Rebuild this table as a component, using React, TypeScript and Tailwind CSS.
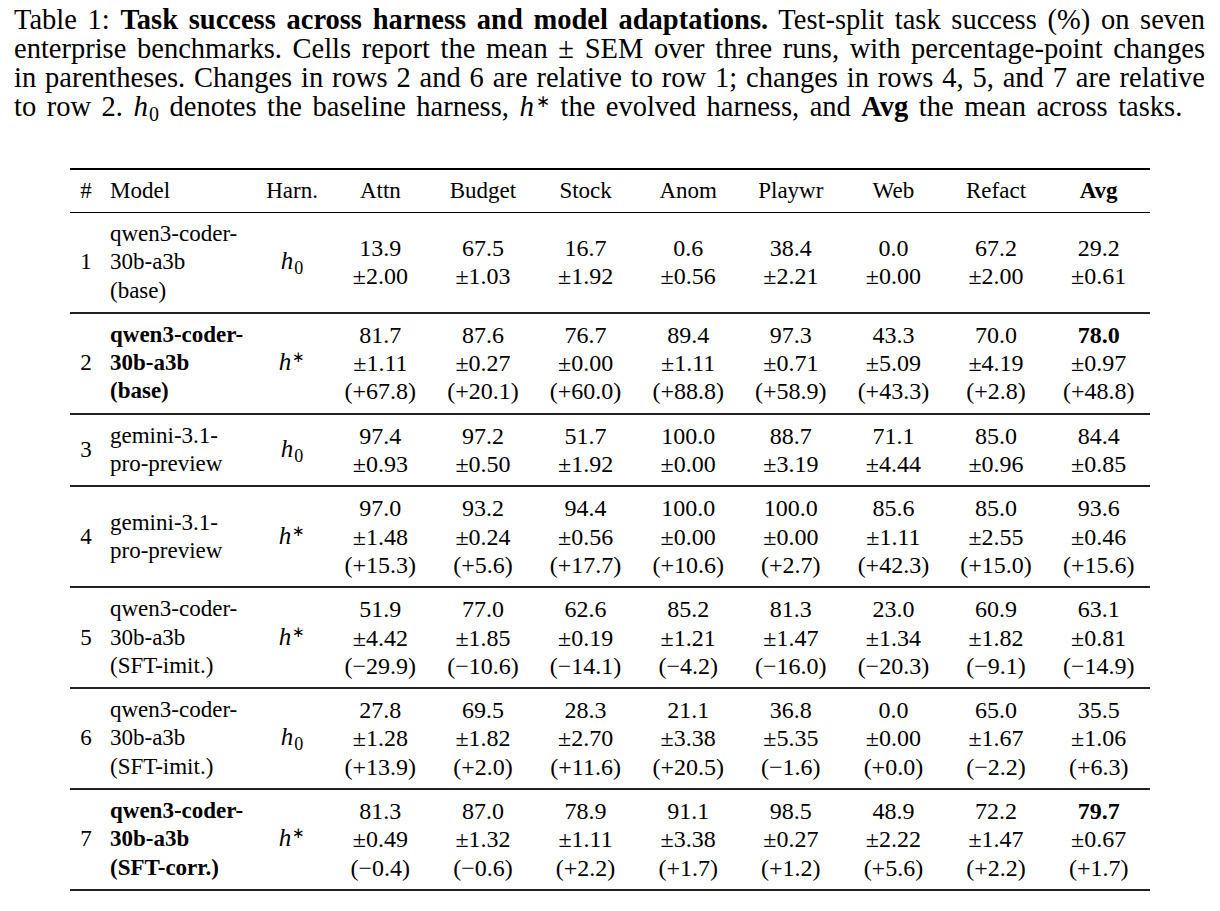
import React from 'react';

type Row = {
  n: number;
  model: string[];
  bold?: boolean;
  harn: '0' | '*';
  vals: [string, string, string?][];
};

const rows: Row[] = [
  {
    n: 1,
    model: ['qwen3-coder-', '30b-a3b', '(base)'],
    harn: '0',
    vals: [
      ['13.9', '±2.00'], ['67.5', '±1.03'], ['16.7', '±1.92'], ['0.6', '±0.56'],
      ['38.4', '±2.21'], ['0.0', '±0.00'], ['67.2', '±2.00'], ['29.2', '±0.61'],
    ],
  },
  {
    n: 2,
    model: ['qwen3-coder-', '30b-a3b', '(base)'],
    bold: true,
    harn: '*',
    vals: [
      ['81.7', '±1.11', '(+67.8)'], ['87.6', '±0.27', '(+20.1)'], ['76.7', '±0.00', '(+60.0)'],
      ['89.4', '±1.11', '(+88.8)'], ['97.3', '±0.71', '(+58.9)'], ['43.3', '±5.09', '(+43.3)'],
      ['70.0', '±4.19', '(+2.8)'], ['78.0', '±0.97', '(+48.8)'],
    ],
  },
  {
    n: 3,
    model: ['gemini-3.1-', 'pro-preview'],
    harn: '0',
    vals: [
      ['97.4', '±0.93'], ['97.2', '±0.50'], ['51.7', '±1.92'], ['100.0', '±0.00'],
      ['88.7', '±3.19'], ['71.1', '±4.44'], ['85.0', '±0.96'], ['84.4', '±0.85'],
    ],
  },
  {
    n: 4,
    model: ['gemini-3.1-', 'pro-preview'],
    harn: '*',
    vals: [
      ['97.0', '±1.48', '(+15.3)'], ['93.2', '±0.24', '(+5.6)'], ['94.4', '±0.56', '(+17.7)'],
      ['100.0', '±0.00', '(+10.6)'], ['100.0', '±0.00', '(+2.7)'], ['85.6', '±1.11', '(+42.3)'],
      ['85.0', '±2.55', '(+15.0)'], ['93.6', '±0.46', '(+15.6)'],
    ],
  },
  {
    n: 5,
    model: ['qwen3-coder-', '30b-a3b', '(SFT-imit.)'],
    harn: '*',
    vals: [
      ['51.9', '±4.42', '(−29.9)'], ['77.0', '±1.85', '(−10.6)'], ['62.6', '±0.19', '(−14.1)'],
      ['85.2', '±1.21', '(−4.2)'], ['81.3', '±1.47', '(−16.0)'], ['23.0', '±1.34', '(−20.3)'],
      ['60.9', '±1.82', '(−9.1)'], ['63.1', '±0.81', '(−14.9)'],
    ],
  },
  {
    n: 6,
    model: ['qwen3-coder-', '30b-a3b', '(SFT-imit.)'],
    harn: '0',
    vals: [
      ['27.8', '±1.28', '(+13.9)'], ['69.5', '±1.82', '(+2.0)'], ['28.3', '±2.70', '(+11.6)'],
      ['21.1', '±3.38', '(+20.5)'], ['36.8', '±5.35', '(−1.6)'], ['0.0', '±0.00', '(+0.0)'],
      ['65.0', '±1.67', '(−2.2)'], ['35.5', '±1.06', '(+6.3)'],
    ],
  },
  {
    n: 7,
    model: ['qwen3-coder-', '30b-a3b', '(SFT-corr.)'],
    bold: true,
    harn: '*',
    vals: [
      ['81.3', '±0.49', '(−0.4)'], ['87.0', '±1.32', '(−0.6)'], ['78.9', '±1.11', '(+2.2)'],
      ['91.1', '±3.38', '(+1.7)'], ['98.5', '±0.27', '(+1.2)'], ['48.9', '±2.22', '(+5.6)'],
      ['72.2', '±1.47', '(+2.2)'], ['79.7', '±0.67', '(+1.7)'],
    ],
  },
];

const heads = ['Attn', 'Budget', 'Stock', 'Anom', 'Playwr', 'Web', 'Refact'];

// math-style h with subscript 0 or superscript asterisk
const Harness = ({ kind, big }: { kind: '0' | '*'; big?: boolean }) => (
  <span className={big ? 'text-[29px] leading-none whitespace-nowrap' : 'text-[25px] leading-none whitespace-nowrap'}>
    <span className="italic">h</span>
    {kind === '0' ? (
      <span className={big ? 'text-[20px] relative top-[5px] ml-[1px]' : 'text-[18px] relative top-[5px] ml-[1px]'}>0</span>
    ) : (
      <span className={big ? 'text-[17px] relative -top-[9px] ml-[2px]' : 'text-[15px] relative -top-[8px] ml-[1px]'}>∗</span>
    )}
  </span>
);

export default function App() {
  return (
    <div className="w-[1220px] h-[911px] bg-white text-black font-['Liberation_Serif',serif] overflow-hidden">
      {/* Caption */}
      <div className="pl-[14px] pr-[15px] pt-[5px] text-[28.5px] leading-[29px]">
        <div className="h-[29px] whitespace-nowrap text-justify [text-align-last:justify]">
          Table 1: <b>Task success across harness and model adaptations.</b> Test-split task success (%) on seven
        </div>
        <div className="h-[29px] whitespace-nowrap text-justify [text-align-last:justify]">
          enterprise benchmarks. Cells report the mean ± SEM over three runs, with percentage-point changes
        </div>
        <div className="h-[29px] whitespace-nowrap text-justify [text-align-last:justify]">
          in parentheses. Changes in rows 2 and 6 are relative to row 1; changes in rows 4, 5, and 7 are relative
        </div>
        <div className="h-[29px] whitespace-nowrap [word-spacing:3.4px]">
          to row 2. <Harness kind="0" big /> denotes the baseline harness, <Harness kind="*" big /> the evolved harness, and{' '}
          <b>Avg</b> the mean across tasks.
        </div>
      </div>

      {/* Table */}
      <div className="pl-[70px] pt-[47px]">
        <table className="w-[1080px] table-fixed border-collapse text-[23px] leading-[28px]">
          <colgroup>
            <col className="w-[32px]" />
            <col className="w-[153px]" />
            <col className="w-[74px]" />
            {[...Array(8)].map((_, i) => (
              <col key={i} className="w-[102.6px]" />
            ))}
          </colgroup>
          <thead>
            <tr className="border-t-2 border-b border-black">
              <th className="font-normal text-center py-[7px]">#</th>
              <th className="font-normal text-left pl-2 py-[7px]">Model</th>
              <th className="font-normal text-center py-[7px]">Harn.</th>
              {heads.map((h) => (
                <th key={h} className="font-normal text-center py-[7px]">
                  {h}
                </th>
              ))}
              <th className="font-bold text-center py-[7px]">Avg</th>
            </tr>
          </thead>
          <tbody className="leading-[28.3px]">
            {rows.map((r) => (
              <tr key={r.n} className="border-b-2 border-[#222]">
                <td className="text-center align-middle py-[7px]">{r.n}</td>
                <td className={`text-left align-middle pl-2 py-[7px] ${r.bold ? 'font-bold' : ''}`}>
                  {r.model.map((m, i) => (
                    <div key={i}>{m}</div>
                  ))}
                </td>
                <td className="text-center align-middle py-[7px]">
                  <Harness kind={r.harn} />
                </td>
                {r.vals.map((v, i) => (
                  <td key={i} className="text-center align-middle py-[7px] text-[24px]">
                    <div className={i === 7 && r.bold ? 'font-bold' : ''}>{v[0]}</div>
                    <div>{v[1]}</div>
                    {v[2] && <div>{v[2]}</div>}
                  </td>
                ))}
              </tr>
            ))}
          </tbody>
        </table>
      </div>
    </div>
  );
}
